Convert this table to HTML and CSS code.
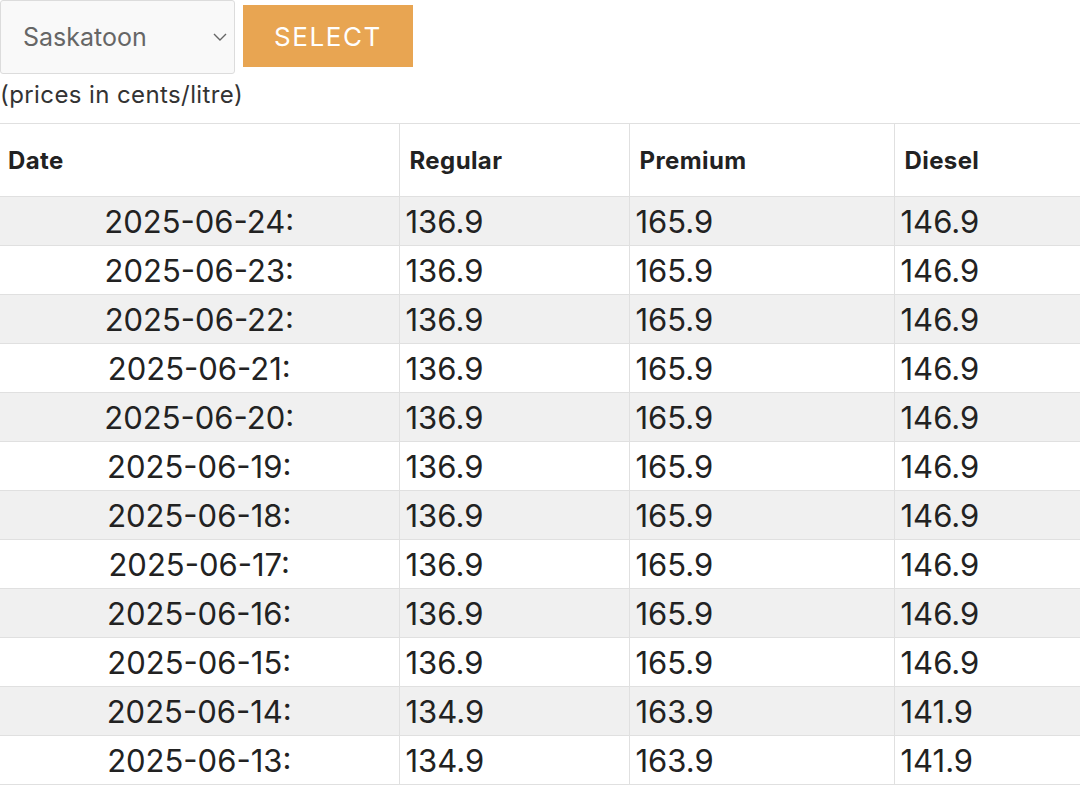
FILE: index.html
```html
<!DOCTYPE html>
<html lang="en">
<head>
<meta charset="utf-8">
<title>Gas prices</title>
<link rel="stylesheet" href="styles.css">
</head>
<body>
<form class="picker">
  <div class="select-wrap">
    <select class="city">
      <option>Saskatoon</option>
    </select>
    <svg class="chev" width="16" height="10" viewBox="0 0 16 10"><path d="M2 2 L8 8 L14 2" fill="none" stroke="#666" stroke-width="1.4"/></svg>
  </div>
  <button type="button" class="btn">SELECT</button>
</form>
<p class="note">(prices in cents/litre)</p>
<table class="prices">
  <colgroup>
    <col class="c-date"><col class="c-reg"><col class="c-prem"><col class="c-dsl">
  </colgroup>
  <thead>
    <tr><th>Date</th><th>Regular</th><th>Premium</th><th>Diesel</th></tr>
  </thead>
  <tbody>
    <tr><td class="d">2025-06-24:</td><td>136.9</td><td>165.9</td><td>146.9</td></tr>
    <tr><td class="d">2025-06-23:</td><td>136.9</td><td>165.9</td><td>146.9</td></tr>
    <tr><td class="d">2025-06-22:</td><td>136.9</td><td>165.9</td><td>146.9</td></tr>
    <tr><td class="d">2025-06-21:</td><td>136.9</td><td>165.9</td><td>146.9</td></tr>
    <tr><td class="d">2025-06-20:</td><td>136.9</td><td>165.9</td><td>146.9</td></tr>
    <tr><td class="d">2025-06-19:</td><td>136.9</td><td>165.9</td><td>146.9</td></tr>
    <tr><td class="d">2025-06-18:</td><td>136.9</td><td>165.9</td><td>146.9</td></tr>
    <tr><td class="d">2025-06-17:</td><td>136.9</td><td>165.9</td><td>146.9</td></tr>
    <tr><td class="d">2025-06-16:</td><td>136.9</td><td>165.9</td><td>146.9</td></tr>
    <tr><td class="d">2025-06-15:</td><td>136.9</td><td>165.9</td><td>146.9</td></tr>
    <tr><td class="d">2025-06-14:</td><td>134.9</td><td>163.9</td><td>141.9</td></tr>
    <tr><td class="d">2025-06-13:</td><td>134.9</td><td>163.9</td><td>141.9</td></tr>
  </tbody>
</table>
</body>
</html>
```

FILE: styles.css
```css
html, body {
  margin: 0;
  padding: 0;
  background: #fff;
}
body {
  font-family: Inter, "Noto Sans", sans-serif;
  color: #222;
  width: 1080px;
  overflow: hidden;
}
.picker {
  display: flex;
  align-items: flex-start;
  gap: 8px;
  margin: 0;
}
.select-wrap {
  position: relative;
  width: 235px;
  height: 74px;
}
.city {
  -webkit-appearance: none;
  appearance: none;
  width: 235px;
  height: 74px;
  box-sizing: border-box;
  border: 1px solid #dcdcdc;
  border-radius: 3px;
  background: #f9f9f9;
  color: #666;
  font-family: Inter, sans-serif;
  font-size: 25px;
  padding: 0 0 0 22px;
  margin: 0;
}
.chev {
  position: absolute;
  right: 7px;
  top: 32px;
  pointer-events: none;
}
.btn {
  margin-top: 5px;
  width: 170px;
  height: 62px;
  border: none;
  background: #e8a552;
  color: #fff;
  font-family: Inter, sans-serif;
  font-size: 26px;
  letter-spacing: 1.6px;
  padding: 0;
}
.note {
  margin: 0;
  padding-top: 5px;
  height: 44px;
  box-sizing: border-box;
  font-size: 24px;
  letter-spacing: 0.4px;
  line-height: 32px;
  color: #333;
}
.prices {
  border-collapse: collapse;
  width: 1080px;
  table-layout: fixed;
  margin-top: 5px;
}
.c-date { width: 399px; }
.c-reg { width: 230px; }
.c-prem { width: 265px; }
.c-dsl { width: 186px; }
.prices th, .prices td {
  border: 1px solid #e0e0e0;
  vertical-align: middle;
}
.prices th:first-child, .prices td:first-child {
  border-left: none;
}
.prices th {
  height: 72px;
  padding: 0 9px 0 10px;
  text-align: left;
  font-size: 24px;
  font-weight: 700;
  letter-spacing: 0.4px;
  color: #222;
}
.prices th:first-child {
  padding-left: 8px;
}
.prices td {
  height: 48px;
  padding: 0 6px;
  font-size: 31px;
  font-weight: 400;
  color: #222;
}
.prices td.d {
  text-align: center;
}
.prices tbody tr:nth-child(odd) td {
  background: #f0f0f0;
}
```
